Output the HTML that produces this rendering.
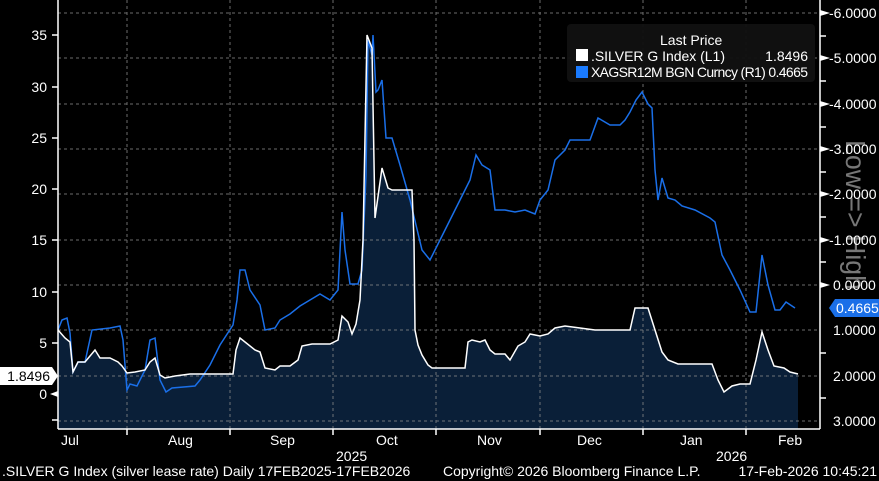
<!DOCTYPE html>
<html><head><meta charset="utf-8"><style>
html,body{margin:0;padding:0;background:#000;}
svg{display:block;font-family:"Liberation Sans",sans-serif;}
</style></head><body>
<svg width="879" height="481" viewBox="0 0 879 481">
<rect width="879" height="481" fill="#000"/>
<polygon fill="#0a1f38" points="58,429 58,330 65,338 70,342 73,372 78,362 85,362 90,356 95,350 100,358 110,358 118,362 122,366 127,373 135,372 145,370 150,362 155,358 160,375 165,378 175,376 190,374 233,374 236,350 240,338 245,342 255,350 260,352 265,368 275,370 280,366 290,366 298,360 302,346 312,344 330,344 338,340 342,316 348,322 352,334 356,324 360,300 363,240 367,35 372,48 375,218 382,168 388,188 392,190 412,190 414,240 415,330 418,345 422,355 428,365 432,368 465,368 468,342 472,340 480,342 485,340 490,350 495,354 505,354 510,360 518,346 525,342 530,334 540,336 548,334 555,328 565,326 580,328 595,330 630,330 635,308 648,308 655,330 662,352 668,360 678,364 712,364 718,380 724,392 732,386 740,384 750,384 756,360 762,332 768,350 774,366 784,368 790,372 798,374 798,429"/>
<g stroke="#888" stroke-width="1" stroke-dasharray="3,3" opacity="0.8">
<line x1="58" y1="13" x2="820" y2="13"/><line x1="58" y1="58" x2="820" y2="58"/><line x1="58" y1="104" x2="820" y2="104"/><line x1="58" y1="149" x2="820" y2="149"/><line x1="58" y1="194" x2="820" y2="194"/><line x1="58" y1="240" x2="820" y2="240"/><line x1="58" y1="285" x2="820" y2="285"/><line x1="58" y1="330" x2="820" y2="330"/><line x1="58" y1="376" x2="820" y2="376"/><line x1="58" y1="421" x2="820" y2="421"/>
<line x1="127" y1="0" x2="127" y2="429"/><line x1="230" y1="0" x2="230" y2="429"/><line x1="333" y1="0" x2="333" y2="429"/><line x1="436" y1="0" x2="436" y2="429"/><line x1="540" y1="0" x2="540" y2="429"/><line x1="643" y1="0" x2="643" y2="429"/><line x1="746" y1="0" x2="746" y2="429"/>
</g>
<polyline fill="none" stroke="#1a6fe8" stroke-width="1.5" points="58,330 62,320 67,318 70,333 73,372 78,362 85,362 92,330 110,328 120,326 123,340 127,390 130,384 137,386 145,370 150,340 155,338 160,380 166,392 172,388 195,386 200,380 210,365 220,345 233,325 237,300 240,270 245,270 250,290 260,305 265,330 275,328 280,320 290,314 300,306 310,300 320,294 330,300 338,290 342,212 345,250 350,284 358,284 362,270 366,175 368,40 372,55 373,35 376,92 378,90 382,80 386,138 392,138 400,165 410,200 422,250 430,260 440,240 450,220 460,200 470,180 476,155 482,165 490,170 495,210 505,210 515,212 525,210 535,214 540,200 548,190 555,160 565,150 570,140 580,140 590,140 598,118 610,125 620,125 625,120 630,112 636,100 642,92 648,104 652,108 655,170 658,200 662,178 668,198 675,200 682,206 695,210 710,218 715,222 722,255 730,270 740,290 750,312 756,312 762,255 768,285 775,310 780,310 786,302 795,308"/>
<polyline fill="none" stroke="#fff" stroke-width="1.5" points="58,330 65,338 70,342 73,372 78,362 85,362 90,356 95,350 100,358 110,358 118,362 122,366 127,373 135,372 145,370 150,362 155,358 160,375 165,378 175,376 190,374 233,374 236,350 240,338 245,342 255,350 260,352 265,368 275,370 280,366 290,366 298,360 302,346 312,344 330,344 338,340 342,316 348,322 352,334 356,324 360,300 363,240 367,35 372,48 375,218 382,168 388,188 392,190 412,190 414,240 415,330 418,345 422,355 428,365 432,368 465,368 468,342 472,340 480,342 485,340 490,350 495,354 505,354 510,360 518,346 525,342 530,334 540,336 548,334 555,328 565,326 580,328 595,330 630,330 635,308 648,308 655,330 662,352 668,360 678,364 712,364 718,380 724,392 732,386 740,384 750,384 756,360 762,332 768,350 774,366 784,368 790,372 798,374"/>
<g stroke="#fff" stroke-width="1.5">
<line x1="58" y1="0" x2="58" y2="429"/><line x1="58" y1="429" x2="820" y2="429"/><line x1="820" y1="0" x2="820" y2="429"/>
<line x1="52" y1="35" x2="58" y2="35"/><line x1="52" y1="87" x2="58" y2="87"/><line x1="52" y1="138" x2="58" y2="138"/><line x1="52" y1="189" x2="58" y2="189"/><line x1="52" y1="240" x2="58" y2="240"/><line x1="52" y1="292" x2="58" y2="292"/><line x1="52" y1="343" x2="58" y2="343"/><line x1="52" y1="420" x2="58" y2="420"/>
<line x1="127" y1="429" x2="127" y2="435"/><line x1="230" y1="429" x2="230" y2="435"/><line x1="333" y1="429" x2="333" y2="435"/><line x1="436" y1="429" x2="436" y2="435"/><line x1="540" y1="429" x2="540" y2="435"/><line x1="643" y1="429" x2="643" y2="435"/><line x1="746" y1="429" x2="746" y2="435"/>
<line x1="820" y1="36" x2="826" y2="36"/><line x1="820" y1="81" x2="826" y2="81"/><line x1="820" y1="127" x2="826" y2="127"/><line x1="820" y1="172" x2="826" y2="172"/><line x1="820" y1="217" x2="826" y2="217"/><line x1="820" y1="262" x2="826" y2="262"/><line x1="820" y1="353" x2="826" y2="353"/><line x1="820" y1="398" x2="826" y2="398"/>
</g>
<g fill="#fff">
<polygon points="820,10 830,13 820,16"/><polygon points="820,55 830,58 820,61"/><polygon points="820,101 830,104 820,107"/><polygon points="820,146 830,149 820,152"/><polygon points="820,191 830,194 820,197"/><polygon points="820,237 830,240 820,243"/><polygon points="820,282 830,285 820,288"/>
<polygon points="58,391 50,394 58,397"/>
</g>
<g fill="#fff" font-size="14" text-anchor="end">
<text x="47" y="40">35</text><text x="47" y="92">30</text><text x="47" y="143">25</text><text x="47" y="194">20</text><text x="47" y="245">15</text><text x="47" y="297">10</text><text x="47" y="348">5</text><text x="47" y="399">0</text>
</g>
<rect x="0" y="367" width="52" height="18" fill="#fff"/>
<polygon points="52,367 58,376 52,385" fill="#fff"/>
<text x="50" y="381" fill="#000" font-size="14" text-anchor="end">1.8496</text>
<text transform="translate(846,140) rotate(90)" fill="#777" font-size="28" textLength="150" lengthAdjust="spacingAndGlyphs">Low =&gt; High</text>
<g fill="#fff" font-size="14">
<text x="829" y="18">-6.0000</text><text x="829" y="63">-5.0000</text><text x="829" y="109">-4.0000</text><text x="829" y="154">-3.0000</text><text x="829" y="199">-2.0000</text><text x="829" y="245">-1.0000</text><text x="833" y="290">0.0000</text><text x="833" y="335">1.0000</text><text x="833" y="381">2.0000</text><text x="833" y="426">3.0000</text>
</g>
<polygon points="829,308 835,299 879,299 879,317 835,317" fill="#1a6fe8"/>
<text x="836" y="313" fill="#fff" font-size="14">0.4665</text>
<g fill="#fff" font-size="14">
<text x="61" y="445">Jul</text><text x="168" y="445">Aug</text><text x="270" y="445">Sep</text><text x="376" y="445">Oct</text><text x="477" y="445">Nov</text><text x="577" y="445">Dec</text><text x="680" y="445">Jan</text><text x="778" y="445">Feb</text>
<text x="336" y="461">2025</text><text x="716" y="461">2026</text>
<text x="2" y="476">.SILVER G Index (silver lease rate) Daily 17FEB2025-17FEB2026</text>
<text x="443" y="476">Copyright© 2026 Bloomberg Finance L.P.</text>
<text x="877" y="476" text-anchor="end">17-Feb-2026 10:45:21</text>
</g>
<rect x="567" y="24" width="248" height="58" rx="4" fill="#111" opacity="0.95"/>
<g fill="#fff" font-size="14" style="white-space:pre">
<text x="660" y="45">Last Price</text>
<rect x="576" y="49" width="12" height="12" fill="#fff"/>
<text x="591" y="61" textLength="134" lengthAdjust="spacing">.SILVER G Index  (L1)</text><text x="808" y="61" text-anchor="end">1.8496</text>
<rect x="576" y="66" width="12" height="12" fill="#1a7bff"/>
<text x="591" y="77" textLength="217" lengthAdjust="spacing">XAGSR12M BGN Curncy  (R1) 0.4665</text>
</g>
</svg>
</body></html>
